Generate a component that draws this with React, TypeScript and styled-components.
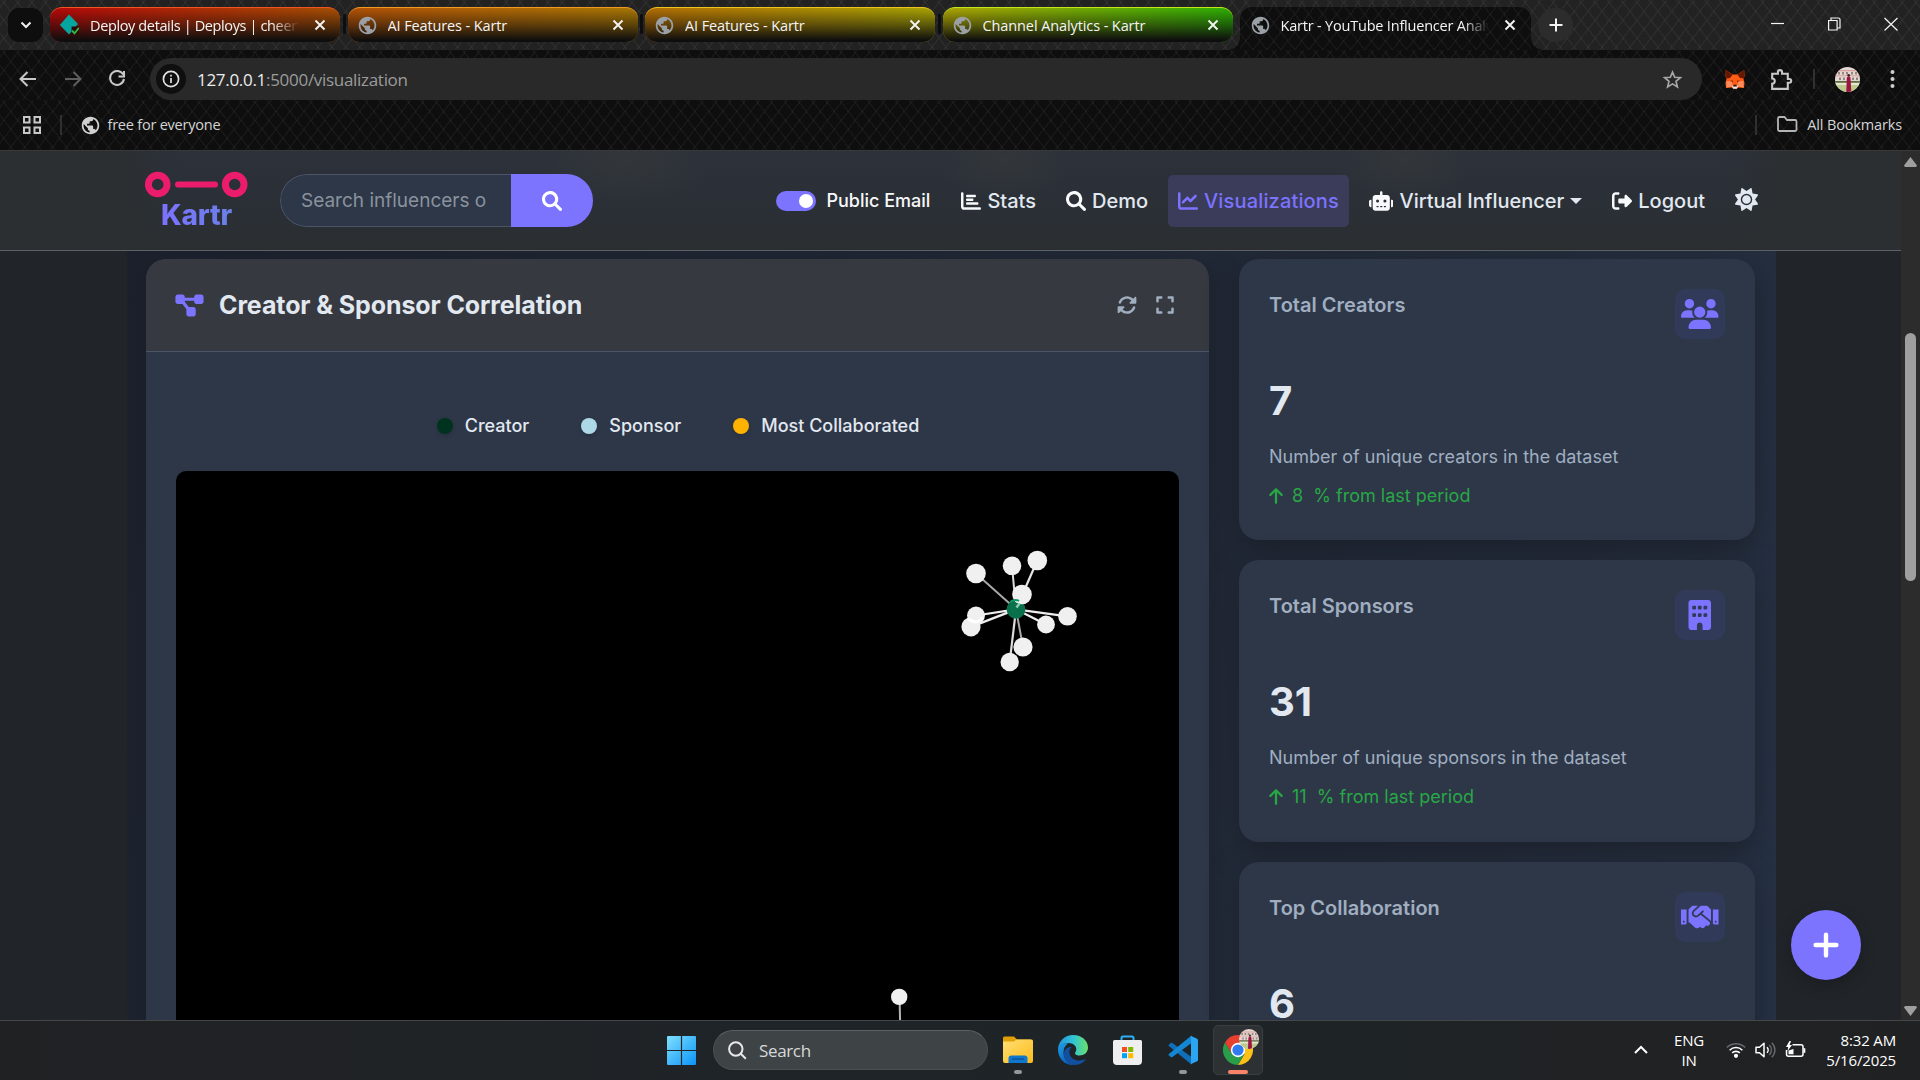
import React from "react";
import styled, { createGlobalStyle, css } from "styled-components";
import {
  FaArrowUp,
  FaBuilding,
  FaChartBar,
  FaChartLine,
  FaDiagramProject,
  FaExpand,
  FaRightFromBracket,
  FaRobot,
  FaRotate,
  FaSun,
  FaUsers,
} from "react-icons/fa6";
import { FaHandshake } from "react-icons/fa";
import { MdPublic } from "react-icons/md";

const GlobalStyle = createGlobalStyle`
  * { box-sizing: border-box; }
  html, body { margin: 0; padding: 0; background: #0e0e0e; }
  body { width: 1920px; height: 1080px; overflow: hidden; }
  svg { display: block; flex: none; }
`;

const uiFont = css`
  font-family: "Open Sans", "Noto Sans", sans-serif;
`;

const mesh = css`
  background-image:
    repeating-linear-gradient(52deg, transparent 0 9.5px, rgba(255, 255, 255, 0.04) 9.5px 11px),
    repeating-linear-gradient(-52deg, transparent 0 9.5px, rgba(255, 255, 255, 0.04) 9.5px 11px);
`;

const Screen = styled.div`
  width: 1920px;
  height: 1080px;
  display: flex;
  flex-direction: column;
  overflow: hidden;
`;

/* ---------- browser chrome ---------- */

const TabStrip = styled.div`
  ${uiFont}
  height: 50px;
  flex: none;
  display: flex;
  align-items: flex-start;
  padding: 7px 0 0 8px;
  background-color: #222222;
  ${mesh}
`;

const TabSearch = styled.div`
  width: 35px;
  height: 34px;
  margin: 1px 7px 0 0;
  border-radius: 11px;
  background: #0e0e0e;
  display: grid;
  place-items: center;
`;

const Tab = styled.div<{ $from: string; $to: string; $edge: string }>`
  width: 290px;
  height: 35px;
  border-radius: 12px;
  padding: 0 14px 0 9px;
  display: flex;
  align-items: center;
  border-top: 1px solid ${(p) => p.$edge};
  background:
    linear-gradient(to bottom, rgba(14, 14, 14, 0) 0, rgba(14, 14, 14, 0.5) 50%, #0e0e0e 95%),
    linear-gradient(to right, ${(p) => p.$from}, ${(p) => p.$to});
`;

const TabGap = styled.div<{ $hidden?: boolean }>`
  width: 3px;
  height: 20px;
  margin: 7px 2px 0 2.5px;
  border-radius: 1px;
  background: ${(p) => (p.$hidden ? "transparent" : "#0e0e0e")};
`;

const ActiveTab = styled.div`
  position: relative;
  width: 291px;
  height: 43px;
  border-radius: 12px 12px 0 0;
  padding: 1px 15px 8px 9.5px;
  display: flex;
  align-items: center;
  background-color: #0e0e0e;
  ${mesh}
  &::before,
  &::after {
    content: "";
    position: absolute;
    bottom: 0;
    width: 12px;
    height: 12px;
  }
  &::before {
    left: -12px;
    background: radial-gradient(circle at 0 0, transparent 11.5px, #0e0e0e 12px);
  }
  &::after {
    right: -12px;
    background: radial-gradient(circle at 100% 0, transparent 11.5px, #0e0e0e 12px);
  }
`;

const TabIcon = styled.div`
  width: 20px;
  margin-right: 11px;
  color: #9aa0a6;
`;

const TabTitle = styled.div<{ $fade?: boolean; $ls: number }>`
  flex: 1;
  overflow: hidden;
  white-space: nowrap;
  font-size: 14.5px;
  letter-spacing: ${(p) => p.$ls}px;
  color: #f4f4f4;
  margin-right: 15px;
  ${(p) =>
    p.$fade &&
    css`
      mask-image: linear-gradient(to right, #000 87%, transparent 100%);
    `}
`;

const NewTab = styled.div`
  width: 35px;
  height: 34px;
  margin: 1px 0 0 7px;
  border-radius: 50%;
  background: #2c2c2c;
  display: grid;
  place-items: center;
`;

const WindowButtons = styled.div`
  margin-left: auto;
  display: flex;
  padding-top: 10px;
  padding-right: 22px;
  gap: 42.5px;
`;

const Toolbar = styled.div`
  ${uiFont}
  height: 50px;
  flex: none;
  display: flex;
  align-items: center;
  padding: 8px 25.5px 0 16px;
  background-color: #0e0e0e;
  ${mesh}
`;

const NavButtons = styled.div`
  width: 134px;
  flex: none;
  display: flex;
  gap: 20.5px;
`;

const AddressBar = styled.div`
  width: 1552px;
  flex: none;
  height: 42px;
  border-radius: 21px;
  background: #292929;
  display: flex;
  align-items: center;
  padding: 0 19px 0 6px;
`;

const SiteInfo = styled.div`
  width: 30px;
  height: 30px;
  border-radius: 50%;
  background: #0f0f0f;
  display: grid;
  place-items: center;
  margin-right: 11px;
`;

const Url = styled.div`
  flex: 1;
  font-size: 17px;
  letter-spacing: -0.3px;
  color: #9b9b9b;
  b {
    font-weight: 400;
    color: #ececec;
  }
`;

const ToolbarRight = styled.div`
  flex: 1;
  display: flex;
  align-items: center;
  padding-left: 23px;
`;

const Divider = styled.div<{ $h: number; $m: string }>`
  width: 2px;
  height: ${(p) => p.$h}px;
  margin: ${(p) => p.$m};
  background: #303030;
`;

const BookmarkBar = styled.div`
  ${uiFont}
  height: 51px;
  flex: none;
  display: flex;
  align-items: center;
  padding: 0 18px 0 23px;
  background-color: #0e0e0e;
  border-bottom: 1px solid #393939;
  color: #d4d4d4;
  font-size: 14.5px;
  ${mesh}
`;

const BookmarkLabel = styled.span<{ $ml: number; $ls: number }>`
  margin-left: ${(p) => p.$ml}px;
  padding-bottom: 2px;
  letter-spacing: ${(p) => p.$ls}px;
`;

const Spacer = styled.div`
  flex: 1;
`;

/* ---------- page ---------- */

const PageRow = styled.div`
  height: 869px;
  flex: none;
  display: flex;
  overflow: hidden;
  font-family: Inter, "Liberation Sans", sans-serif;
`;

const Page = styled.div`
  flex: 1;
  display: flex;
  flex-direction: column;
  background: #212529;
  overflow: hidden;
`;

const Scrollbar = styled.div`
  width: 19px;
  background: #2c2c2c;
  display: flex;
  flex-direction: column;
  align-items: center;
  padding: 6px 0 4px;
`;

const Thumb = styled.div`
  width: 11px;
  height: 248px;
  margin: 166px 0 auto;
  border-radius: 6px;
  background: #9f9f9f;
`;

const SiteNav = styled.header`
  height: 100px;
  flex: none;
  display: flex;
  align-items: center;
  padding: 0 143px 0 145px;
  border-bottom: 1px solid #5c6265;
  background:
    radial-gradient(ellipse 70px 40px at 1005px 8px, rgba(52, 56, 58, 0.8), transparent),
    radial-gradient(ellipse 70px 40px at 1405px 8px, rgba(52, 56, 58, 0.8), transparent),
    radial-gradient(ellipse 90px 45px at 625px 8px, rgba(52, 56, 58, 0.8), transparent),
    linear-gradient(to right, #2b2f31 110px, transparent 180px 1720px, #2b2f31 1800px),
    linear-gradient(to bottom, #2c313a, #2b3037 50%, #2a2e31);
`;

const Brand = styled.div`
  width: 103px;
  margin-right: 32px;
  display: flex;
  flex-direction: column;
  align-items: center;
`;

const BrandName = styled.div`
  font-size: 28px;
  line-height: 34px;
  font-weight: 800;
  letter-spacing: -0.2px;
  margin-bottom: -1px;
  background: linear-gradient(90deg, #7c72ff, #6a80e8);
  background-clip: text;
  color: transparent;
`;

const SearchBox = styled.div`
  width: 313px;
  height: 53px;
  display: flex;
  border-radius: 27px;
  overflow: hidden;
`;

const SearchInput = styled.div`
  flex: 1;
  border: 1px solid #4a5568;
  border-right: 0;
  border-radius: 27px 0 0 27px;
  background: #2d3748;
  padding: 0 0 1px 20px;
  display: flex;
  align-items: center;
  font-size: 19px;
  white-space: nowrap;
  color: #8a929d;
`;

const SearchButton = styled.div`
  width: 82px;
  background: #7c73ff;
  color: #fff;
  display: grid;
  place-items: center;
`;

const MenuItems = styled.nav`
  margin-left: auto;
  margin-top: 1px;
  display: flex;
  align-items: center;
  gap: 10px;
  color: #e2e8f0;
`;

const Switch = styled.div`
  width: 40px;
  height: 20px;
  border-radius: 10px;
  background: #7c73ff;
  display: flex;
  justify-content: flex-end;
  align-items: center;
  padding-right: 3px;
  &::after {
    content: "";
    width: 14px;
    height: 14px;
    border-radius: 50%;
    background: #fff;
  }
`;

const SwitchLabel = styled.div`
  font-size: 18px;
  font-weight: 500;
  color: #f8f9fa;
  margin-right: 11px;
  padding-bottom: 2px;
`;

const MenuLink = styled.div<{ $active?: boolean; $icon?: number }>`
  height: 52px;
  padding: 0 10px;
  border-radius: 5px;
  display: flex;
  align-items: center;
  gap: 6px;
  font-size: 20px;
  font-weight: 500;
  letter-spacing: ${(p) => (p.$active ? 0.16 : 0)}px;
  white-space: nowrap;
  color: ${(p) => (p.$active ? "#7c73ff" : "#e2e8f0")};
  background: ${(p) => (p.$active ? "#3b3c5a" : "transparent")};
  svg {
    height: 20px;
    width: ${(p) => p.$icon ?? 20}px;
    color: ${(p) => (p.$active ? "#7c73ff" : "#f8f9fa")};
  }
`;

const Caret = styled.i`
  border: 6px solid transparent;
  border-top-color: currentColor;
  border-bottom: 0;
`;

const ThemeButton = styled.div`
  margin-left: 10px;
  margin-top: -3px;
`;

const Content = styled.main`
  width: 1649px;
  height: 769px;
  margin-left: 127px;
  padding: 8px 21px 0 19px;
  display: flex;
  align-items: flex-start;
  gap: 30px;
  background: linear-gradient(115deg, #1c212d 0%, #222a38 60%, #273245 100%);
  overflow: hidden;
`;

const panel = css`
  border-radius: 20px;
  background: #2d3748;
  box-shadow: 0 10px 30px rgba(26, 29, 38, 0.75);
`;

const GraphCard = styled.section`
  width: 1063px;
  height: 1100px;
  flex: none;
  overflow: hidden;
  ${panel}
`;

const GraphHeader = styled.div`
  height: 93px;
  padding: 0 34px 0 29px;
  display: flex;
  align-items: center;
  border-bottom: 1px solid #4a5568;
  background: #363940;
  color: #a0aec0;
  > svg {
    width: 29px;
    height: 25px;
  }
`;

const GraphTitle = styled.h2`
  margin: 0 auto 0 15px;
  font-size: 25px;
  font-weight: 700;
  letter-spacing: -0.1px;
  color: #e2e8f0;
`;

const HeaderIcons = styled.div`
  display: flex;
  gap: 18.5px;
`;

const Legend = styled.div`
  height: 119px;
  padding: 28.5px 0 0 1px;
  display: flex;
  align-items: center;
  justify-content: center;
  gap: 52px;
  font-size: 18px;
  font-weight: 500;
  color: #e2e8f0;
`;

const LegendItem = styled.div`
  display: flex;
  align-items: center;
  gap: 12px;
`;

const Dot = styled.i<{ $c: string }>`
  width: 16px;
  height: 16px;
  border-radius: 50%;
  background: ${(p) => p.$c};
  box-shadow: 0 2px 4px rgba(0, 0, 0, 0.15);
`;

const GraphCanvas = styled.div`
  margin: 0 30px;
  height: 800px;
  border-radius: 10px;
  background: #000;
  overflow: hidden;
`;

const Stats = styled.aside`
  width: 516px;
  flex: none;
  display: flex;
  flex-direction: column;
  gap: 20px;
`;

const StatCard = styled.section`
  height: 281.4px;
  flex: none;
  padding: 30px;
  ${panel}
`;

const StatHead = styled.div`
  height: 87px;
  display: flex;
  justify-content: space-between;
  align-items: flex-start;
  font-size: 20px;
  line-height: 33px;
  font-weight: 600;
  color: #a0aec0;
`;

const StatIcon = styled.div`
  width: 50px;
  height: 50px;
  border-radius: 10px;
  background: #323a5a;
  color: #7c73ff;
  display: grid;
  place-items: center;
  svg {
    height: 30px;
    width: 37.5px;
  }
`;

const StatValue = styled.div`
  font-size: 40px;
  line-height: 50px;
  font-weight: 700;
  color: #e2e8f0;
`;

const StatNote = styled.div`
  margin-top: 16.6px;
  font-size: 18px;
  line-height: 28px;
  color: #a0aec0;
`;

const StatTrend = styled.div`
  margin-top: 11px;
  display: flex;
  align-items: center;
  font-size: 18px;
  line-height: 28px;
  color: #28a745;
  white-space: pre;
  svg {
    height: 18px;
    width: 14px;
    margin-right: 9.5px;
    margin-left: -0.5px;
  }
`;

const Fab = styled.div`
  position: absolute;
  left: 1791px;
  top: 910px;
  width: 70px;
  height: 70px;
  border-radius: 50%;
  background: #7c73ff;
  display: grid;
  place-items: center;
  box-shadow: 0 5px 15px rgba(0, 0, 0, 0.25);
`;

/* ---------- taskbar ---------- */

const Taskbar = styled.footer`
  ${uiFont}
  height: 60px;
  flex: none;
  display: flex;
  align-items: flex-start;
  padding: 4px 24px 0 667px;
  border-top: 1px solid #444749;
  background: linear-gradient(to right, #202123, #1f2428 40%, #1e2326 72%, #212223 85%, #202123);
  color: #fff;
`;

const StartButton = styled.div`
  margin: 11px 17px 0 0;
`;

const TaskSearch = styled.div`
  width: 275px;
  height: 40px;
  margin: 5px 5px 0 0;
  border-radius: 20px;
  border: 1px solid #4a4f52;
  border-top-color: #5c6063;
  background: #3e4346;
  display: flex;
  align-items: center;
  padding-left: 14px;
  gap: 12px;
  font-size: 17px;
  letter-spacing: -0.35px;
  color: #d8d8d8;
`;

const TaskApp = styled.div<{ $active?: boolean }>`
  position: relative;
  width: 50px;
  height: 50px;
  margin-right: 5px;
  border-radius: 5px;
  border: 1px solid ${(p) => (p.$active ? "#3a3e40" : "transparent")};
  background: ${(p) => (p.$active ? "#2d3134" : "transparent")};
  display: grid;
  place-items: center;
`;

const Running = styled.i<{ $active?: boolean }>`
  position: absolute;
  bottom: 0;
  left: ${(p) => (p.$active ? 14 : 20)}px;
  width: ${(p) => (p.$active ? 20 : 8)}px;
  height: 4px;
  border-radius: 2px;
  background: ${(p) => (p.$active ? "#f88468" : "#93979a")};
`;

const AppBadge = styled.div`
  position: absolute;
  right: 3px;
  top: 3px;
`;

const Tray = styled.div`
  margin-left: auto;
  height: 50px;
  display: flex;
  align-items: center;
`;

const Lang = styled.div`
  width: 40px;
  margin: 0 17px 0 21px;
  text-align: center;
  font-size: 15px;
  line-height: 20px;
  letter-spacing: -0.2px;
`;

const TrayIcons = styled.div`
  display: flex;
  align-items: center;
  gap: 9px;
`;

const Clock = styled.div`
  width: 90px;
  text-align: right;
  font-size: 15px;
  line-height: 20px;
  letter-spacing: -0.15px;
  white-space: nowrap;
`;

/* ---------- drawings ---------- */

type Stroke = { d: string; size?: number; color?: string; w?: number; box?: number };
const Line = ({ d, size = 24, color = "#c8c8c8", w = 2, box = 24 }: Stroke) => (
  <svg width={size} height={size} viewBox={`0 0 ${box} ${box}`} fill="none" stroke={color} strokeWidth={w}>
    <path d={d} />
  </svg>
);

const CloseX = () => <Line d="M1.5 1.5l9 9M10.5 1.5l-9 9" size={12} box={12} color="#f4f4f4" w={1.9} />;

const Magnifier = () => (
  <svg width="20" height="20" viewBox="0 0 512 512" fill="currentColor">
    <path d="M500.3 443.700l-119.700-119.700c27.220-40.410 40.650-90.900 33.460-144.700C401.800 87.790 326.800 13.320 235.200 1.723C99.010-15.510-15.510 99.010 1.724 235.200c11.600 91.640 86.080 166.700 177.600 178.900c53.800 7.189 104.300-6.236 144.700-33.460l119.700 119.700c15.620 15.620 40.950 15.620 56.570 0C515.900 484.700 515.900 459.300 500.300 443.700zM79.100 208c0-70.580 57.420-128 128-128s128 57.420 128 128c0 70.580-57.420 128-128 128S79.100 278.600 79.100 208z" />
  </svg>
);

const PlusMark = () => (
  <svg width="26" height="26" viewBox="0 0 26 26" stroke="#fff" strokeWidth="4.400" strokeLinecap="round">
    <path d="M13 2.600v20.800M2.600 13h20.800" />
  </svg>
);

const DeployIcon = () => (
  <svg width="20" height="22" viewBox="-1 0 20 22">
    <path d="M9 .5L18 10 9 20.500-.2 11z" fill="#05a5a0" />
    <path d="M11.500 12.500h8.500v8.500h-8.500z" fill="#2a0c06" />
    <path d="M12 16.500l2.500 2.800 4.500-5.500" stroke="#34b34a" strokeWidth="1.900" fill="none" />
  </svg>
);

const Fox = () => (
  <svg width="20" height="20" viewBox="0 0 20 20">
    <path d="M.8 1l6.700 4.500h5L19.200 1l.3 6-1 3 1 4-.5 5-5.500-.5-2 1h-3l-2-1-5.500.5-.5-5 1-4-1-3z" fill="#ff5c16" />
    <path d="M.8 1l6.700 4.700L5 9 1.300 9.500.5 6zM19.200 1l-6.700 4.700L15 9l3.700.5.8-3.500z" fill="#661800" />
    <path d="M1.500 12l5 .5 1.500 5-6.500 1zM18.500 12l-5 .5-1.500 5 6.500 1z" fill="#ff8d5d" />
    <path d="M5 11.500l3 .3v1.200zM15 11.500l-3 .3v1.200z" fill="#661800" />
    <path d="M7 17l1.800-1h2.400l1.800 1-1 2.700H8z" fill="#f2e3dc" />
    <path d="M8.500 15.800h3l.4 1.600H8.100z" fill="#2b1109" />
  </svg>
);

const Portrait = ({ size }: { size: number }) => (
  <svg width={size} height={size} viewBox="0 0 25 25">
    <defs>
      <clipPath id={`round${size}`}>
        <circle cx="12.500" cy="12.500" r="12.500" />
      </clipPath>
    </defs>
    <g clipPath={`url(#round${size})`}>
      <path d="M0 0h25v25H0z" fill="#e4d6d2" />
      <path d="M0 3h25v1.300H0zM0 8.300h25v1H0z" fill="#d9a19b" />
      <path d="M3 5h2v2.500H3zM7 5h2v2.500H7zM11 5h2v2.500h-2zM16 5h2v2.500h-2zM20 5h2v2.500h-2zM4 10.500h2V13H4zM8 10.500h2V13H8zM17 10.500h2V13h-2zM21 10.500h2V13h-2z" fill="#94867f" />
      <path d="M0 14h25v2H0z" fill="#5d6b3c" />
      <path d="M0 15.800h25V18H0z" fill="#e6e6d2" />
      <path d="M0 18h25v7H0z" fill="#bccb8c" />
      <path d="M11.800 10.500l2-1.500 1.700 1.500.8 14.500h-5z" fill="#9c1440" />
      <circle cx="13.700" cy="8.200" r="1.300" fill="#3b2320" />
    </g>
  </svg>
);

const LogoMark = () => (
  <svg width="103" height="27" viewBox="0 0 103 27" fill="none" stroke="#ec1c6c">
    <circle cx="12.700" cy="13.500" r="9.300" strokeWidth="7" />
    <circle cx="89.700" cy="13.500" r="9.300" strokeWidth="7" />
    <path d="M33 13.500h37" strokeWidth="6" strokeLinecap="round" />
  </svg>
);

const sponsors = [
  { x: 976, y: 573.5, r: 9.8, w: 2, c: "#a8a8a8" },
  { x: 1012, y: 565.8, r: 9.3, w: 2, c: "#dcdcdc" },
  { x: 1037.3, y: 560.5, r: 9.8, w: 2.2, c: "#e6e6e6" },
  { x: 1022, y: 594.5, r: 9.8, w: 3, c: "#dcdcdc" },
  { x: 976, y: 615.5, r: 9, w: 2.2, c: "#eeeeee" },
  { x: 971, y: 626.8, r: 9.6, w: 2.4, c: "#eeeeee" },
  { x: 1067.5, y: 616.3, r: 9.3, w: 2.2, c: "#eeeeee" },
  { x: 1046, y: 624.5, r: 8.9, w: 2.2, c: "#eeeeee" },
  { x: 1023, y: 647, r: 9.6, w: 2, c: "#a8a8a8" },
  { x: 1009.7, y: 662, r: 9.2, w: 2.2, c: "#dcdcdc" },
];

const Network = () => (
  <svg width="1003" height="549" viewBox="176 471 1003 549">
    {sponsors.map((s) => (
      <line key={`l${s.x}${s.y}`} x1="1016" y1="609.300" x2={s.x} y2={s.y} stroke={s.c} strokeWidth={s.w} />
    ))}
    <circle cx="1016" cy="609.300" r="9.400" fill="#08704a" />
    {sponsors.map((s) => (
      <circle key={`c${s.x}${s.y}`} cx={s.x} cy={s.y} r={s.r} fill="#f0f0f0" />
    ))}
    <path d="M968 618.500q8 7 15-1" stroke="#ffffff" strokeWidth="3" fill="none" />
    <path d="M1016.500 607.500l3-4" stroke="#8accb0" strokeWidth="2.500" />
    <path d="M1010 602q5-3.500 9-1" stroke="#0c9a66" strokeWidth="2" fill="none" />
    <path d="M899.600 1000l.5 22" stroke="#b5b5b5" strokeWidth="2" />
    <circle cx="899.200" cy="996.900" r="8.200" fill="#f0f0f0" />
  </svg>
);

const WindowsLogo = () => (
  <svg width="29" height="29" viewBox="0 0 29 29">
    <defs>
      <linearGradient id="win" x1="0" y1="0" x2="1" y2="1">
        <stop offset="0" stopColor="#7fe0ff" />
        <stop offset="1" stopColor="#0a93f7" />
      </linearGradient>
    </defs>
    <path
      d="M1 0h12.900v13.900H0V1a1 1 0 011-1zM15.100 0H28a1 1 0 011 1v12.900H15.100zM0 15.100h13.900V29H1a1 1 0 01-1-1zM15.100 15.100H29V28a1 1 0 01-1 1H15.100z"
      fill="url(#win)"
    />
  </svg>
);

const Explorer = () => (
  <svg width="30" height="28" viewBox="0 0 30 28">
    <defs>
      <linearGradient id="fold" x1="0" y1="0" x2="1" y2="1">
        <stop offset="0" stopColor="#ffdf73" />
        <stop offset="1" stopColor="#fdbb1c" />
      </linearGradient>
    </defs>
    <path d="M0 2a1.500 1.500 0 011.500-1.500H11l3 3H28V9H0z" fill="#e0a006" />
    <path d="M0 5.500h11l2.500-2H28.500A1.500 1.500 0 0130 5v20a2 2 0 01-2 2H2a2 2 0 01-2-2z" fill="url(#fold)" />
    <path d="M5.500 27v-4.500a3 3 0 013-3h13a3 3 0 013 3V27z" fill="#0f78cc" />
    <path d="M9 23h12" stroke="#0a4f92" strokeWidth="1.300" />
  </svg>
);

const Edge = () => (
  <svg width="30" height="30" viewBox="0 0 30 30">
    <defs>
      <linearGradient id="e1" x1="0" y1="0.300" x2="1" y2="0.300">
        <stop offset="0" stopColor="#2390dc" />
        <stop offset="0.500" stopColor="#2fc3d6" />
        <stop offset="1" stopColor="#6be06a" />
      </linearGradient>
      <linearGradient id="e2" x1="0" y1="0" x2="0.500" y2="1">
        <stop offset="0" stopColor="#1fa0e8" />
        <stop offset="1" stopColor="#0a5cb8" />
      </linearGradient>
    </defs>
    <path d="M0 14C.5 6 7 0 15 0c9 0 15 6 15 12.500 0 5-4 8-8.500 8-3.500 0-4.500-1.500-4.500-2.500 0-.8 1.300-1.500 1.300-4C18.300 11 15 8 10.500 8 5 8 1.500 10.500 0 14z" fill="url(#e1)" />
    <path d="M0 14c1.500-4.500 6-6 10-5.600-3 2-4.500 5-4.500 9 0 5.500 4 11 10.500 12.500C7 30.500 0 24 0 14z" fill="url(#e2)" />
    <path d="M14 12c-2 1-3 3.500-2.500 6.500.8 4.500 5 7 9.500 7 3.500 0 6-1.500 6.500-1.200.5.500-4 5.900-11.500 5.700C9 29 5 23 6 17.500 6.500 14 10 11.500 14 12z" fill="#124f9e" />
  </svg>
);

const Store = () => (
  <svg width="30" height="30" viewBox="0 0 30 30">
    <path d="M8.500 6V3a1.500 1.500 0 011.500-1.500h9A1.500 1.500 0 0120.500 3v3" fill="none" stroke="#2cb0f2" strokeWidth="2" />
    <path d="M0 6.500A1.500 1.500 0 011.500 5h26A1.500 1.500 0 0129 6.500V26a4 4 0 01-4 4H4a4 4 0 01-4-4z" fill="#efefef" />
    <path d="M9 12h5v5H9z" fill="#f25022" />
    <path d="M15.200 12h5v5h-5z" fill="#7fba00" />
    <path d="M9 18.200h5v5H9z" fill="#00a4ef" />
    <path d="M15.200 18.200h5v5h-5z" fill="#ffb900" />
  </svg>
);

const VsCode = () => (
  <svg width="30" height="30" viewBox="0 0 30 30">
    <path d="M1.200 9.500l1.600-1.400a1.200 1.200 0 011.600 0L23.500 22v7.500L.9 11.100a1 1 0 01.3-1.600z" fill="#0f6fb8" />
    <path d="M1.200 20.500l1.600 1.400a1.200 1.200 0 001.600 0L23.500 8V.5L.9 18.900a1 1 0 00.3 1.600z" fill="#1487d4" />
    <path d="M22 .4L28.600 3.400A2 2 0 0130 5.300v19.400a2 2 0 01-1.400 1.900L22 29.600c.6-.2 1-1 1-1.800V2.200c0-.8-.4-1.600-1-1.800z" fill="#2ba5f2" />
  </svg>
);

const Chrome = () => (
  <svg width="30" height="30" viewBox="0 0 30 30">
    <path d="M15 8h13.300A15 15 0 0115 30l6.500-11z" fill="#fbc116" />
    <path d="M2 7.500A15 15 0 0015 30l6.300-11H9z" fill="#2a9d4a" />
    <path d="M2 7.500A15 15 0 0128 7.700L15 8.200 9 18.800z" fill="#e8402f" />
    <circle cx="15" cy="15" r="7.200" fill="#fff" />
    <circle cx="15" cy="15" r="5.600" fill="#2f7bf0" />
  </svg>
);

const Wifi = () => (
  <svg width="20" height="18" viewBox="0 0 20 18" fill="none" stroke="#fff" strokeWidth="1.600">
    <path d="M.8 6.500a13 13 0 0118.400 0" stroke="#64686b" />
    <path d="M3.600 9.200a9 9 0 0112.800 0M6.200 11.900a5.400 5.400 0 017.600 0" />
    <circle cx="10" cy="14.800" r="1.300" fill="#fff" />
  </svg>
);

const Volume = () => (
  <svg width="21" height="18" viewBox="0 0 21 18" fill="none" stroke="#fff" strokeWidth="1.500">
    <path d="M1 6.200h3.500L9 2.200v13.600l-4.500-4H1z" strokeLinejoin="round" />
    <path d="M12 6.200a4 4 0 010 5.600" />
    <path d="M14.300 4a7 7 0 010 10M16.800 1.800a10 10 0 010 14.400" stroke="#64686b" />
  </svg>
);

const Battery = () => (
  <svg width="21" height="18" viewBox="0 0 21 18">
    <path d="M7.500 3.800h8.500a2 2 0 012 2v7.400a2 2 0 01-2 2H3.500a2 2 0 01-2-2V9" fill="none" stroke="#fff" strokeWidth="1.500" />
    <path d="M18.500 7.200h1.800v4.600h-1.800z" fill="#fff" />
    <path d="M3.500 9.500L8.500 8v5.300h-5z" fill="#fff" />
    <path d="M4.500 0L1 6h2.200l-.7 4L7 4H4.600L6 0z" fill="#fff" />
  </svg>
);

const MenuDots = () => (
  <svg width="5" height="22" viewBox="0 0 5 22" fill="#cfcfcf">
    <circle cx="2.500" cy="4" r="2" />
    <circle cx="2.500" cy="11" r="2" />
    <circle cx="2.500" cy="18" r="2" />
  </svg>
);

const tabs = [
  { title: "Deploy details | Deploys | cheerful", from: "#b80808", to: "#a85004", edge: "#ee5522", deploy: true, ls: -0.37 },
  { title: "AI Features - Kartr", from: "#b45206", to: "#aa7804", edge: "#f09a22", ls: -0.12 },
  { title: "AI Features - Kartr", from: "#b46e04", to: "#a8a404", edge: "#eec41c", ls: -0.12 },
  { title: "Channel Analytics - Kartr", from: "#b0a604", to: "#2cb004", edge: "#c4e41c", ls: -0.1 },
];

const stats = [
  { title: "Total Creators", value: "7", note: "Number of unique creators in the dataset", change: "8", icon: <FaUsers /> },
  { title: "Total Sponsors", value: "31", note: "Number of unique sponsors in the dataset", change: "11", icon: <FaBuilding /> },
  { title: "Top Collaboration", value: "6", note: "", change: "", icon: <FaHandshake /> },
];

export default function App() {
  return (
    <Screen>
      <GlobalStyle />
      <TabStrip>
        <TabSearch>
          <Line d="M1.500 3.500L6 8l4.500-4.500" size={12} box={12} color="#f0f0f0" w={2} />
        </TabSearch>
        {tabs.map((t, i) => (
          <React.Fragment key={i}>
            <Tab $from={t.from} $to={t.to} $edge={t.edge}>
              <TabIcon>{t.deploy ? <DeployIcon /> : <MdPublic size={21} />}</TabIcon>
              <TabTitle $fade={t.deploy} $ls={t.ls}>{t.title}</TabTitle>
              <CloseX />
            </Tab>
            <TabGap $hidden={i === 3} />
          </React.Fragment>
        ))}
        <ActiveTab>
          <TabIcon><MdPublic size={21} /></TabIcon>
          <TabTitle $fade $ls={-0.2}>Kartr - YouTube Influencer Analysis</TabTitle>
          <CloseX />
        </ActiveTab>
        <NewTab>
          <Line d="M7 .5v13M.5 7h13" size={14} box={14} color="#f4f4f4" w={2} />
        </NewTab>
        <WindowButtons>
          <Line d="M0 6.500h13" size={14} box={14} color="#f4f4f4" w={1.2} />
          <Line d="M.6 3.500h8.500v9.500H.6zM3 3V1h7.500a1.500 1.500 0 011.500 1.500v8.500h-2.500" size={14} box={14} color="#f4f4f4" w={1.2} />
          <Line d="M.5 1l13 12.500M13.500 1l-13 12.500" size={14} box={14} color="#f4f4f4" w={1.2} />
        </WindowButtons>
      </TabStrip>

      <Toolbar>
        <NavButtons>
          <Line d="M20 12H5M11.500 5L4.500 12l7 7" />
          <Line d="M4 12h15M12.500 5l7 7-7 7" color="#5e5e5e" />
          <Line d="M18.200 7.500A7 7 0 1019 12M19 4v5.500h-5.500" />
        </NavButtons>
        <AddressBar>
          <SiteInfo>
            <svg width="18" height="18" viewBox="0 0 18 18" fill="none" stroke="#e0e0e0" strokeWidth="1.700">
              <circle cx="9" cy="9" r="7.600" />
              <path d="M9 8v5M9 4.800v1.800" />
            </svg>
          </SiteInfo>
          <Url><b>127.0.0.1</b>:5000/visualization</Url>
          <Line
            d="M12 3.500l2.500 6 6.500.5-5 4.200 1.600 6.300L12 17l-5.600 3.500L8 14.200 3 10l6.500-.5z"
            size={21}
            color="#a8a8a8"
            w={1.9}
          />
        </AddressBar>
        <ToolbarRight>
          <Fox />
          <Spacer />
          <Line
            d="M4 6.500h5.500V5a2 2 0 014 0v1.500H19v5h1.500a1.800 1.800 0 010 3.600H19V21H4v-5a2.500 2.500 0 000-5z"
            size={25}
            w={2}
          />
          <Divider $h={20} $m="0 20px 0 19.500px" />
          <Portrait size={25} />
          <Divider $h={0} $m="0 14px" />
          <MenuDots />
        </ToolbarRight>
      </Toolbar>

      <BookmarkBar>
        <Line d="M1 1h5.500v5.500H1zM11.500 1H17v5.500h-5.500zM1 11.500h5.500V17H1zM11.500 11.500H17V17h-5.500z" size={18} box={18} />
        <Divider $h={20} $m="0 18px 0 19px" />
        <MdPublic size={21} color="#d0d0d0" />
        <BookmarkLabel $ml={6.5} $ls={-0.22}>free for everyone</BookmarkLabel>
        <Spacer />
        <Divider $h={20} $m="0 20px 0 0" />
        <Line d="M1 3.500A1.500 1.500 0 012.500 2h5l2.500 3h8A1.500 1.500 0 0119.500 6.500v8A1.500 1.500 0 0118 16H2.500A1.500 1.500 0 011 14.500z" size={21} box={21} w={1.8} color="#b4b4b4" />
        <BookmarkLabel $ml={9} $ls={-0.15}>All Bookmarks</BookmarkLabel>
      </BookmarkBar>

      <PageRow>
        <Page>
          <SiteNav>
            <Brand>
              <LogoMark />
              <BrandName>Kartr</BrandName>
            </Brand>
            <SearchBox>
              <SearchInput>Search influencers o</SearchInput>
              <SearchButton><Magnifier /></SearchButton>
            </SearchBox>
            <MenuItems>
              <Switch />
              <SwitchLabel>Public Email</SwitchLabel>
              <MenuLink><FaChartBar />Stats</MenuLink>
              <MenuLink><Magnifier />Demo</MenuLink>
              <MenuLink $active><FaChartLine />Visualizations</MenuLink>
              <MenuLink $icon={24.5}><FaRobot />Virtual Influencer<Caret /></MenuLink>
              <MenuLink><FaRightFromBracket />Logout</MenuLink>
              <ThemeButton><FaSun size={23} /></ThemeButton>
            </MenuItems>
          </SiteNav>
          <Content>
            <GraphCard>
              <GraphHeader>
                <FaDiagramProject color="#7c73ff" />
                <GraphTitle>Creator &amp; Sponsor Correlation</GraphTitle>
                <HeaderIcons>
                  <FaRotate size={20} />
                  <FaExpand size={20} />
                </HeaderIcons>
              </GraphHeader>
              <Legend>
                <LegendItem><Dot $c="#00331f" />Creator</LegendItem>
                <LegendItem><Dot $c="#add8e6" />Sponsor</LegendItem>
                <LegendItem><Dot $c="#ffb300" />Most Collaborated</LegendItem>
              </Legend>
              <GraphCanvas><Network /></GraphCanvas>
            </GraphCard>
            <Stats>
              {stats.map((s) => (
                <StatCard key={s.title}>
                  <StatHead>
                    {s.title}
                    <StatIcon>{s.icon}</StatIcon>
                  </StatHead>
                  <StatValue>{s.value}</StatValue>
                  {s.note && <StatNote>{s.note}</StatNote>}
                  {s.change && <StatTrend><FaArrowUp />{s.change}{"  % from last period"}</StatTrend>}
                </StatCard>
              ))}
            </Stats>
          </Content>
        </Page>
        <Scrollbar>
          <svg width="13" height="10" viewBox="0 0 13 10"><path d="M6.500 0L13 8.500 12 10H1L0 8.500z" fill="#9f9f9f" /></svg>
          <Thumb />
          <svg width="13" height="10" viewBox="0 0 13 10"><path d="M6.500 10L13 1.500 12 0H1L0 1.500z" fill="#9f9f9f" /></svg>
        </Scrollbar>
      </PageRow>
      <Fab><PlusMark /></Fab>

      <Taskbar>
        <StartButton><WindowsLogo /></StartButton>
        <TaskSearch>
          <Line d="M12.800 12.800l5 5M14.500 8A6.700 6.700 0 111.100 8a6.700 6.700 0 0113.400 0z" size={19} box={19} color="#e8e8e8" w={2} />
          Search
        </TaskSearch>
        <TaskApp><Explorer /><Running /></TaskApp>
        <TaskApp><Edge /></TaskApp>
        <TaskApp><Store /></TaskApp>
        <TaskApp><VsCode /><Running /></TaskApp>
        <TaskApp $active>
          <Chrome />
          <AppBadge><Portrait size={20} /></AppBadge>
          <Running $active />
        </TaskApp>
        <Tray>
          <Line d="M1 10l6-6 6 6" size={14} box={14} color="#fff" w={2} />
          <Lang>ENG<br />IN</Lang>
          <TrayIcons><Wifi /><Volume /><Battery /></TrayIcons>
          <Clock>8:32 AM<br />5/16/2025</Clock>
        </Tray>
      </Taskbar>
    </Screen>
  );
}
